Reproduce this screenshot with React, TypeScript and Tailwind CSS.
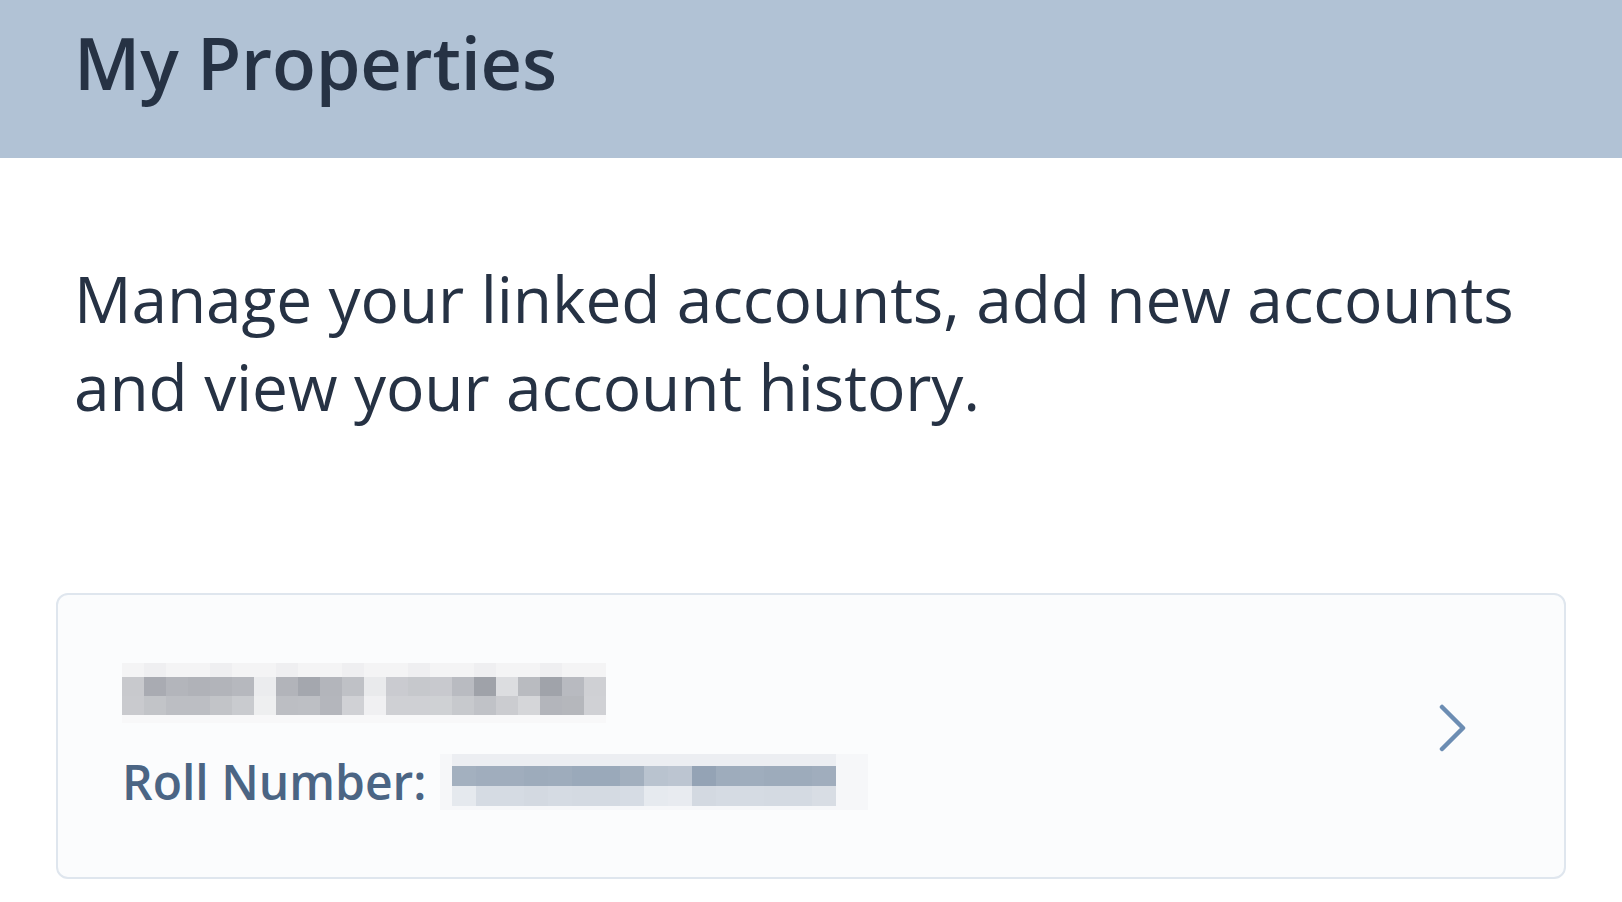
import React from "react";

const nameDark = [
  "#c8c9cd", "#a9abb2", "#b3b5bb", "#b0b2b8", "#b2b4ba", "#b6b8be", "#ebecee", "#b2b4ba",
  "#a4a7ae", "#b3b5bb", "#bfc1c6", "#e9eaec", "#cacbd0", "#c6c8cc", "#c8c9ce", "#b9bbc1",
  "#9fa2a9", "#dcdde0", "#b9bbc0", "#a0a3aa", "#b8bac0", "#cfd0d4",
];
const nameMid = [
  "#c9cace", "#c2c4c8", "#bcbec3", "#bcbec3", "#c2c4c8", "#c9cbcf", "#eeeff0", "#bcbec3",
  "#bdbfc4", "#b4b6bc", "#d0d1d5", "#f0f0f2", "#cfd0d4", "#cfd0d4", "#cfd1d4", "#c7c9cd",
  "#c0c2c7", "#cbccd0", "#d5d6d9", "#b3b5bb", "#b5b7bc", "#d0d1d5",
];
const rollDark = [
  "#a3b0bf", "#a0adbd", "#a0adbd", "#9dabbb", "#9eacbc", "#9aa9ba", "#9aa9ba", "#a2afbe",
  "#b9c3cf", "#bcc5d1", "#94a3b5", "#9eacbc", "#9fadbd", "#9dabbb", "#9dabbb", "#a0adbd",
];
const rollLight = [
  "#e5e9ee", "#d5dbe3", "#d5dbe3", "#d3d9e1", "#d5dbe3", "#d4dae2", "#d4dae2", "#d6dce4",
  "#e6eaef", "#e8ebf0", "#d3d9e1", "#d5dbe3", "#d5dbe3", "#d4dae2", "#d4dae2", "#d8dde4",
];

// pixelated placeholders standing in for the redacted name / roll number
function NameBlur() {
  const w = 22;
  return (
    <svg width="484" height="60" viewBox="0 0 484 60">
      {nameDark.map((c, i) => (
        <g key={i}>
          <rect x={i * w} y={0} width={w} height={14} fill={i % 3 === 1 ? "#efeff1" : "#f4f4f5"} />
          <rect x={i * w} y={14} width={w} height={19} fill={c} />
          <rect x={i * w} y={33} width={w} height={19} fill={nameMid[i]} />
          <rect x={i * w} y={52} width={w} height={8} fill="#f8f8f9" />
        </g>
      ))}
    </svg>
  );
}

function RollBlur() {
  const w = 24;
  return (
    <svg width="428" height="56" viewBox="0 0 428 56">
      <rect x={0} y={0} width={428} height={56} fill="#f6f7f9" />
      {rollDark.map((c, i) => (
        <g key={i}>
          <rect x={12 + i * w} y={0} width={w} height={12} fill="#eceef2" />
          <rect x={12 + i * w} y={12} width={w} height={20} fill={c} />
          <rect x={12 + i * w} y={32} width={w} height={20} fill={rollLight[i]} />
        </g>
      ))}
    </svg>
  );
}

export default function App() {
  return (
    <div className="min-h-screen bg-white font-['Open_Sans',sans-serif]">
      <header className="h-[158px] bg-[#b1c2d5] px-[74px] pt-[26px]">
        <h1 className="text-[72px] font-semibold leading-none tracking-[-0.2px] text-[#263244]">My Properties</h1>
      </header>

      <main className="px-[56px]">
        <p className="mt-[97px] px-[18px] text-[64px] leading-[88px] tracking-[-0.1px] text-[#263244]">
          Manage your linked accounts, add new accounts and view your account history.
        </p>

        <a
          href="#"
          className="mt-[162px] flex h-[286px] items-center justify-between rounded-[12px] border-2 border-[#dfe6ee] bg-[#fbfcfd] pl-[64px] pr-[96px]"
        >
          <div className="flex flex-col gap-[31px]">
            <NameBlur />
            <div className="flex items-center gap-[14px]">
              <span className="text-[48px] font-semibold leading-none text-[#4b6584]">Roll Number:</span>
              <RollBlur />
            </div>
          </div>
          <svg width="30" height="48" viewBox="0 0 30 48" className="mb-[16px]" fill="none">
            <path d="M4 3 L25 24 L4 45" stroke="#6c8db3" strokeWidth="4.5" strokeLinecap="round" strokeLinejoin="round" />
          </svg>
        </a>
      </main>
    </div>
  );
}
